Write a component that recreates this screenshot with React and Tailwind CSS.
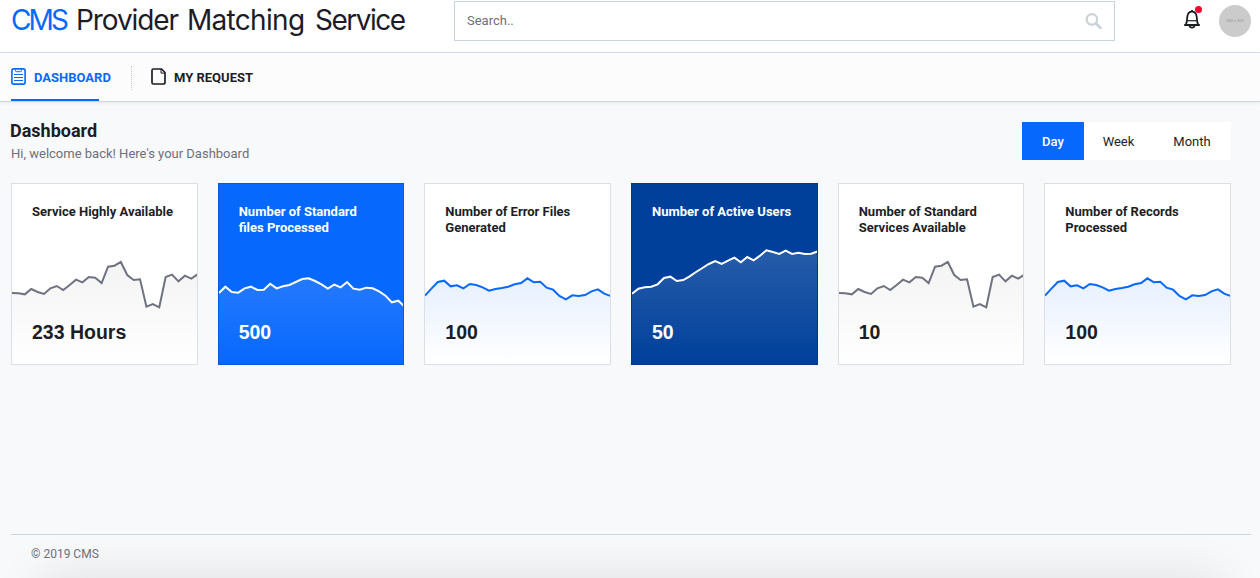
const GRAY = [354,355,358,342,351,357,340,333,345,330,314,322,306,308,324,275,272,261,300,315,313,395,387,397,306,299,319,302,311,298];
const WHITE = [354,335,351,353,340,335,345,344,326,340,334,330,321,312,310,318,328,341,329,337,321,341,344,338,340,349,362,382,377,395];
const BLUE = [362,341,321,317,334,331,340,327,330,337,347,342,339,335,328,324,310,322,320,338,344,363,373,361,363,360,349,343,356,363];
const NAVY = [356,341,337,335,328,309,305,318,315,304,291,279,267,258,267,257,248,262,246,256,242,226,231,237,227,237,233,237,236,229];

const CARDS = [
  { title: ["Service Highly Available"], value: "233 Hours", data: GRAY, stroke: "#6f7280", fill: "#000000", opacity: 0.045, top: 78, box: "bg-white border-[#dcdfe3] text-[#1c1e26]" },
  { title: ["Number of Standard", "files Processed"], value: "500", data: WHITE, stroke: "#ffffff", fill: "#ffffff", opacity: 0.12, top: 94, box: "bg-[#0768fd] border-[#065bdd] text-white" },
  { title: ["Number of Error Files", "Generated"], value: "100", data: BLUE, stroke: "#0768fd", fill: "#0768fd", opacity: 0.1, top: 94, box: "bg-white border-[#dcdfe3] text-[#1c1e26]" },
  { title: ["Number of Active Users"], value: "50", data: NAVY, stroke: "#ffffff", fill: "#ffffff", opacity: 0.15, top: 66, box: "bg-[#00409b] border-[#003888] text-white" },
  { title: ["Number of Standard", "Services Available"], value: "10", data: GRAY, stroke: "#6f7280", fill: "#000000", opacity: 0.045, top: 78, box: "bg-white border-[#dcdfe3] text-[#1c1e26]" },
  { title: ["Number of Records", "Processed"], value: "100", data: BLUE, stroke: "#0768fd", fill: "#0768fd", opacity: 0.1, top: 94, box: "bg-white border-[#dcdfe3] text-[#1c1e26]" },
];

function Sparkline({ id, data, stroke, fill, opacity, top }) {
  const pts = data.map((v, i) => `${((i * 186) / 29).toFixed(2)},${((v - 27) / 3).toFixed(2)}`).join(" ");
  return (
    <svg className="absolute inset-0 h-full w-full" viewBox="0 0 185 180" preserveAspectRatio="none">
      <defs>
        <linearGradient id={id} gradientUnits="userSpaceOnUse" x1="0" x2="0" y1={top} y2="180">
          <stop offset="0" stopColor={fill} stopOpacity={opacity} />
          <stop offset="1" stopColor={fill} stopOpacity="0" />
        </linearGradient>
      </defs>
      <polygon points={`0,180 ${pts} 186,180`} fill={`url(#${id})`} />
      <polyline points={pts} fill="none" stroke={stroke} strokeWidth="2" />
    </svg>
  );
}

function Card({ card, id }) {
  return (
    <div className={`relative h-[182px] flex-1 overflow-hidden border ${card.box}`}>
      <Sparkline id={id} data={card.data} stroke={card.stroke} fill={card.fill} opacity={card.opacity} top={card.top} />
      <div className="relative flex h-full flex-col justify-between px-5 pt-5 pb-5">
        <h2 className="text-[13px] leading-4 font-bold whitespace-nowrap">
          {card.title.map((line) => (
            <span key={line} className="block">{line}</span>
          ))}
        </h2>
        <div className="text-[19.5px] leading-6 font-bold font-['Liberation_Sans',sans-serif]">{card.value}</div>
      </div>
    </div>
  );
}

function Header() {
  return (
    <header className="flex h-[53px] items-start border-b border-[#d9dfe6] bg-white">
      <div className="ml-[11px] flex w-[443px] pt-px text-[28px] leading-[38px] whitespace-nowrap text-[#1c1c28] font-['Inter',sans-serif]">
        <span className="w-[65px] tracking-[-2.9px] text-[#0768fd]">CMS</span>
        <span className="w-[111px] tracking-[-1.1px]">Provider</span>
        <span className="w-[128px] tracking-[-0.7px]">Matching</span>
        <span className="tracking-[-1.5px]">Service</span>
      </div>
      <div className="mt-px flex h-10 w-[661px] items-center justify-between border border-[#cbd3da] pr-3 pl-3">
        <span className="text-[13px] text-[#6d7078]">Search..</span>
        <svg width="17" height="17" viewBox="0 0 17 17" fill="none" stroke="#cbd3da">
          <circle cx="6.9" cy="6.4" r="5.2" strokeWidth="2.3" />
          <path d="M11 10.5 15.3 14.8" strokeWidth="2.8" strokeLinecap="round" />
        </svg>
      </div>
      <div className="relative mt-[9px] ml-[68px] h-5 w-[18px]">
        <svg width="18" height="21" viewBox="0 0 18 21" fill="none" stroke="#1c1e26" strokeWidth="1.8">
          <path d="M1.2 16H16.8M2.8 15.6C4.3 13 3.8 10.5 4.4 7.2 4.9 4.2 6.5 2.7 9 2.7s4.1 1.5 4.6 4.5c.6 3.3.1 5.8 1.6 8.4" />
          <path d="M4.2 11.7h9.6" strokeWidth="1.2" />
          <path d="M6.4 16.4c.3 1.6 1.2 2.3 2.6 2.3s2.3-.7 2.6-2.3M9 1v2" />
        </svg>
        <span className="absolute -top-[3px] left-3 size-[7px] rounded-full bg-[#f80031]" />
      </div>
      <div className="mt-[5px] ml-[18px] flex size-8 items-center justify-center rounded-full bg-[#cbcbcb] text-[4px] text-[#999]">500 x 500</div>
    </header>
  );
}

function Nav() {
  return (
    <nav className="relative z-10 flex h-[49px] border-b border-[#cdd4da] bg-[#fcfcfc] text-[13px] font-bold shadow-[0_1px_4px_rgba(28,39,60,0.08)]">
      <a className="relative ml-[11px] flex h-[48px] w-[100px] items-center gap-2 whitespace-nowrap text-[#0768fd]">
        <svg className="-mt-0.5 shrink-0" width="15" height="17" viewBox="0 0 15 17" fill="none" stroke="currentColor">
          <rect x=".9" y=".9" width="13.2" height="15.2" rx="1.8" strokeWidth="1.6" />
          <path d="M4.5 1.5v1.2q0 1 1 1h4q1 0 1-1V1.5M3 6.5h9M3 9.5h9M3 12.5h9" strokeWidth="1" />
        </svg>
        <span className="mt-px pt-px">DASHBOARD</span>
        <span className="absolute bottom-0 left-0 h-0.5 w-[88px] bg-[#0768fd]" />
      </a>
      <span className="mt-[13px] ml-5 h-6 border-l border-dotted border-[#c4c8ce]" />
      <a className="ml-[19px] flex h-[48px] items-center gap-2 text-[#1c1e26]">
        <svg className="-mt-0.5 shrink-0" width="15" height="17" viewBox="0 0 15 17" fill="none" stroke="currentColor" strokeWidth="1.7">
          <path d="M2.5 1h8L14 4.5v10A1.5 1.5 0 0 1 12.5 16h-10A1.5 1.5 0 0 1 1 14.5v-12A1.5 1.5 0 0 1 2.5 1Z" />
          <path d="M10 1.3v3.8h3.8" strokeWidth="1" />
        </svg>
        <span className="mt-px pt-px">MY REQUEST</span>
      </a>
    </nav>
  );
}

export default function App() {
  return (
    <div className="flex h-[578px] w-[1260px] flex-col overflow-hidden bg-[#f8f9fb] font-['Roboto',sans-serif] text-[#1c1e26]">
      <Header />
      <Nav />
      <main className="flex flex-1 flex-col">
        <div className="mr-[29px] ml-[10px] flex h-[81px] justify-between pt-5">
          <div>
            <h1 className="text-[18px] leading-[18px] font-bold">Dashboard</h1>
            <p className="mt-[5px] ml-px text-[13px] leading-[18px] text-[#6d7078]">Hi, welcome back! Here's your Dashboard</p>
          </div>
          <div className="flex h-[38px] bg-white text-[13px]">
            <button className="w-[62px] bg-[#0768fd] pt-px font-medium text-white">Day</button>
            <button className="w-[69px] pt-px">Week</button>
            <button className="w-[78px] pt-px">Month</button>
          </div>
        </div>
        <section className="mr-[29px] ml-[11px] flex gap-5">
          {CARDS.map((card, i) => (
            <Card key={i} card={card} id={`area-${i}`} />
          ))}
        </section>
        <footer className="relative mt-auto h-[44px]">
          <div className="absolute inset-x-0 bottom-0 h-11 overflow-hidden">
            <div className="absolute inset-x-10 top-full h-12 shadow-[0_0_50px_0_rgba(0,0,0,0.11)]" />
          </div>
          <div className="relative mr-[9px] ml-[11px] border-t border-[#ccd6e0] pt-2.5 pl-5 text-[12px] leading-[18px] text-[#6d7078]">© 2019 CMS</div>
        </footer>
      </main>
    </div>
  );
}
